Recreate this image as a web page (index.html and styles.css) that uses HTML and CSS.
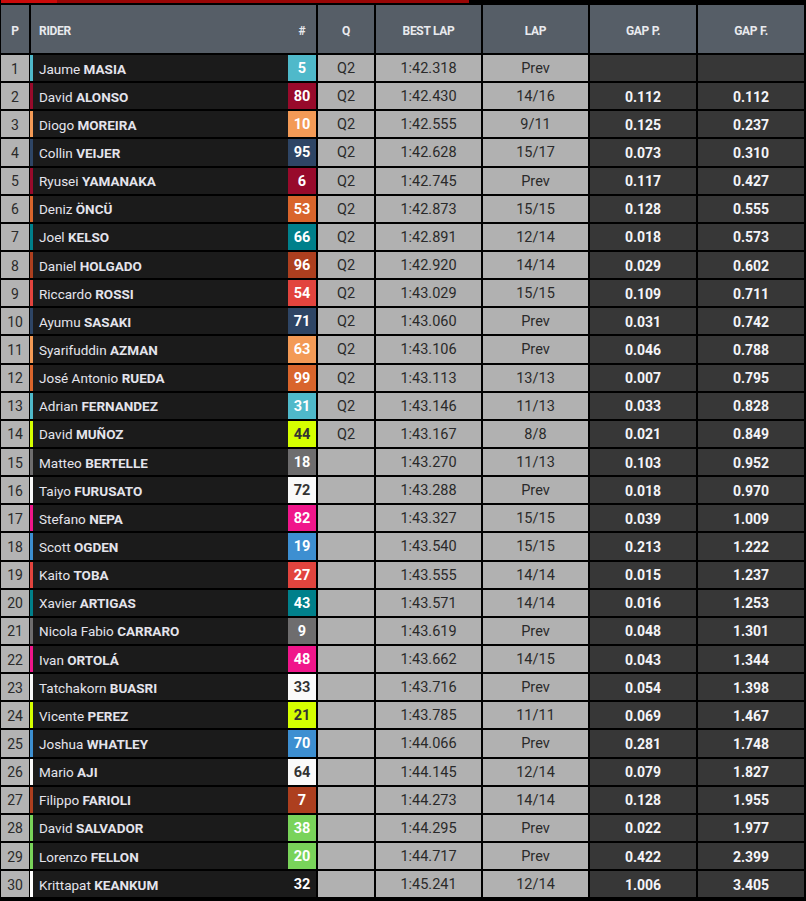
FILE: index.html
```html
<!DOCTYPE html>
<html>
<head>
<meta charset="utf-8">
<link rel="stylesheet" href="styles.css">
</head>
<body>
<div class="bar"></div>
<div class="table">
  <div class="row head">
    <div class="h">P</div>
    <div class="h rider-h"><span>RIDER</span><span class="hash">#</span></div>
    <div class="h">Q</div>
    <div class="h">BEST LAP</div>
    <div class="h">LAP</div>
    <div class="h">GAP P.</div>
    <div class="h">GAP F.</div>
  </div>
  <div id="rows"></div>
</div>
<script src="app.js"></script>
</body>
</html>
```

FILE: app.js
```js
const data = [
  [1,"Jaume","MASIA",5,"#4fb9ca","#fff","Q2","1:42.318","Prev","",""],
  [2,"David","ALONSO",80,"#980a2b","#fff","Q2","1:42.430","14/16","0.112","0.112"],
  [3,"Diogo","MOREIRA",10,"#f39a56","#fff","Q2","1:42.555","9/11","0.125","0.237"],
  [4,"Collin","VEIJER",95,"#2e4565","#fff","Q2","1:42.628","15/17","0.073","0.310"],
  [5,"Ryusei","YAMANAKA",6,"#980a2b","#fff","Q2","1:42.745","Prev","0.117","0.427"],
  [6,"Deniz","ÖNCÜ",53,"#d9652c","#fff","Q2","1:42.873","15/15","0.128","0.555"],
  [7,"Joel","KELSO",66,"#00808b","#fff","Q2","1:42.891","12/14","0.018","0.573"],
  [8,"Daniel","HOLGADO",96,"#ad3f1f","#fff","Q2","1:42.920","14/14","0.029","0.602"],
  [9,"Riccardo","ROSSI",54,"#e2443e","#fff","Q2","1:43.029","15/15","0.109","0.711"],
  [10,"Ayumu","SASAKI",71,"#2e4565","#fff","Q2","1:43.060","Prev","0.031","0.742"],
  [11,"Syarifuddin","AZMAN",63,"#f39a56","#fff","Q2","1:43.106","Prev","0.046","0.788"],
  [12,"José Antonio","RUEDA",99,"#d9652c","#fff","Q2","1:43.113","13/13","0.007","0.795"],
  [13,"Adrian","FERNANDEZ",31,"#4fb9ca","#fff","Q2","1:43.146","11/13","0.033","0.828"],
  [14,"David","MUÑOZ",44,"#d5ff00","#333","Q2","1:43.167","8/8","0.021","0.849"],
  [15,"Matteo","BERTELLE",18,"#6e6d6e","#fff","","1:43.270","11/13","0.103","0.952"],
  [16,"Taiyo","FURUSATO",72,"#fafafa","#333","","1:43.288","Prev","0.018","0.970"],
  [17,"Stefano","NEPA",82,"#f0168b","#fff","","1:43.327","15/15","0.039","1.009"],
  [18,"Scott","OGDEN",19,"#3d8fd1","#fff","","1:43.540","15/15","0.213","1.222"],
  [19,"Kaito","TOBA",27,"#e2443e","#fff","","1:43.555","14/14","0.015","1.237"],
  [20,"Xavier","ARTIGAS",43,"#00808b","#fff","","1:43.571","14/14","0.016","1.253"],
  [21,"Nicola Fabio","CARRARO",9,"#6e6d6e","#fff","","1:43.619","Prev","0.048","1.301"],
  [22,"Ivan","ORTOLÁ",48,"#f0168b","#fff","","1:43.662","14/15","0.043","1.344"],
  [23,"Tatchakorn","BUASRI",33,"#fafafa","#333","","1:43.716","Prev","0.054","1.398"],
  [24,"Vicente","PEREZ",21,"#d5ff00","#333","","1:43.785","11/11","0.069","1.467"],
  [25,"Joshua","WHATLEY",70,"#3d8fd1","#fff","","1:44.066","Prev","0.281","1.748"],
  [26,"Mario","AJI",64,"#fafafa","#333","","1:44.145","12/14","0.079","1.827"],
  [27,"Filippo","FARIOLI",7,"#ad3f1f","#fff","","1:44.273","14/14","0.128","1.955"],
  [28,"David","SALVADOR",38,"#79d35a","#fff","","1:44.295","Prev","0.022","1.977"],
  [29,"Lorenzo","FELLON",20,"#79d35a","#fff","","1:44.717","Prev","0.422","2.399"],
  [30,"Krittapat","KEANKUM",32,"#1b1b1b","#fff","","1:45.241","12/14","1.006","3.405"]
];
const stripes = {30: "#ffffff"};
const rows = document.getElementById("rows");
rows.className = "body";
for (const d of data) {
  const [p, fn, ln, num, bg, fg, q, best, lap, gp, gf] = d;
  const r = document.createElement("div");
  r.className = "row";
  const stripe = stripes[p] || bg;
  r.innerHTML =
    `<div class="c pos">${p}</div>` +
    `<div class="c rider" style="border-left-color:${stripe}"><span class="name">${fn} <b>${ln}</b></span><span class="num" style="background:${bg};color:${fg}">${num}</span></div>` +
    `<div class="c light">${q}</div>` +
    `<div class="c light">${best}</div>` +
    `<div class="c light">${lap}</div>` +
    `<div class="c dark">${gp}</div>` +
    `<div class="c dark">${gf}</div>`;
  rows.appendChild(r);
}
```

FILE: styles.css
```css
html, body {
  margin: 0;
  padding: 0;
  background: #000;
}
body {
  font-family: Roboto, "Liberation Sans", sans-serif;
  width: 806px;
  height: 901px;
  overflow: hidden;
}
.bar {
  height: 3px;
  margin-left: 1px;
  width: 468px;
  background: linear-gradient(to right, #cc0a0a 0, #cc0a0a 56px, #990606 56px, #990606 100%);
}
.table {
  margin-top: 2px;
  margin-left: 1px;
  display: flex;
  flex-direction: column;
  gap: 2px;
}
.body {
  display: flex;
  flex-direction: column;
  gap: 2px;
}
.row {
  display: grid;
  grid-template-columns: 28px 285px 56px 105px 105px 106px 106px;
  column-gap: 2px;
  height: 26.15px;
}
.row.head {
  height: 48px;
}
.h {
  background: #565e67;
  color: #e9eaee;
  font-weight: 700;
  font-size: 12px;
  letter-spacing: -0.3px;
  display: flex;
  align-items: center;
  justify-content: center;
  padding-top: 3px;
  box-sizing: border-box;
}
.rider-h {
  justify-content: space-between;
  padding-left: 8px;
}
.rider-h .hash {
  width: 28px;
  text-align: center;
}
.c {
  display: flex;
  align-items: center;
  justify-content: center;
  font-size: 13.5px;
  padding-top: 1px;
  box-sizing: border-box;
}
.pos {
  background: #b3b3b3;
  color: #2a2a2a;
  font-size: 14px;
}
.rider {
  background: #1b1b1b;
  border-left: 3px solid #000;
  margin-left: -1px;
  justify-content: space-between;
  color: #e4e4ec;
  padding-top: 0;
}
.rider .name {
  padding-left: 6px;
  padding-top: 1px;
}
.rider b {
  font-weight: 700;
}
.num {
  width: 28px;
  align-self: stretch;
  display: flex;
  align-items: center;
  justify-content: center;
  font-weight: 700;
  font-size: 14.5px;
  padding-top: 1px;
}
.light {
  background: #b1b1b1;
  color: #2a2a2a;
  font-size: 14.5px;
}
.dark {
  background: #373737;
  color: #f4f4f8;
  font-weight: 700;
  font-size: 14px;
}
```
